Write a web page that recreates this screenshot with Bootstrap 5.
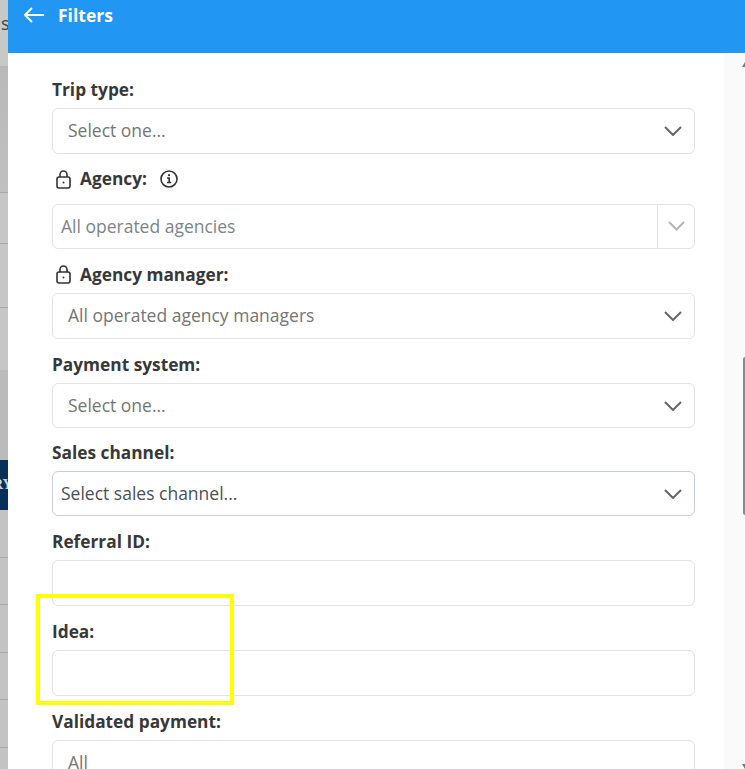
<!DOCTYPE html>
<html lang="en">
<head>
<meta charset="utf-8">
<title>Filters</title>
<link rel="stylesheet" href="https://cdn.jsdelivr.net/npm/bootstrap@5.3.0/dist/css/bootstrap.min.css">
<style>
html,body{height:769px;overflow:hidden}
body{font-family:"Open Sans",sans-serif;color:#333;background:#fff}
.stage{height:769px;overflow:hidden}
.backdrop{width:8px;flex:none;background:#c2c3c2;position:relative;overflow:hidden}
.backdrop-band{position:absolute;left:0;width:100%}
.band-top{top:0;height:66px;background:#c8c8c7}
.band-upper{top:66px;height:126px;background:linear-gradient(#b9b9b9,#c0c0c0)}
.band-middle{top:192px;height:178px;background:#c6c6c6}
.band-lower{top:370px;height:90px;background:#bbb}
.backdrop-s{position:absolute;left:1px;top:12px;font-size:18px;color:#444;line-height:22px}
.backdrop-line{height:1px;background:#a9a9a9;width:100%;position:absolute;left:0}
.backdrop-dark{position:absolute;left:0;top:460px;width:8px;height:50px;background:#07305a;color:#ccd4dc;font:700 14px "Liberation Serif",serif;line-height:50px;overflow:hidden;white-space:nowrap;text-indent:-7px}
.drawer{flex:1 1 auto;min-width:0;display:flex;flex-direction:column}
.drawer-head{height:53px;flex:none;background:#2196f3;color:#fff;padding:4px 0 0 16px;gap:14px;font-weight:700;font-size:17.5px;line-height:22px}
.drawer-body{flex:1 1 auto;display:flex;min-height:0}
.form-area{width:716px;flex:none;padding:25px 29px 0 44px}
.track{flex:1 1 auto;background:#fafafa;position:relative}
.thumb{position:absolute;right:0;top:304px;width:2px;height:158px;background:#8a8a8a;border-radius:2px 0 0 2px}
.arrow-up,.arrow-down{position:absolute;right:0;width:0;height:0;border-left:3px solid transparent}
.arrow-up{top:9px;border-bottom:5px solid #777}
.arrow-down{bottom:0;border-top:5px solid #777}
.field-label{font-weight:700;font-size:17.3px;line-height:22px;color:#383838;margin:0 0 7px;padding-top:1px;gap:9px;box-sizing:content-box}
.field-label.tall-gap{margin-bottom:14px}
.field-box{height:46px;border:1px solid #e3e3e3;border-radius:6px;background:#fff;color:#757575;font-size:17.5px;line-height:42px;padding:0 15px;margin-bottom:13.8px;position:relative}
.field-box.first-box{margin-bottom:13px}
.field-box svg{position:absolute;right:12px;top:17px}
.compact{height:45px;line-height:42px}
.edge-tight{padding-left:8px}
.strong-edge{border-color:#c9ced6;color:#495057}
.muted-text{color:#7d838a}
.split-end{position:absolute;right:0;top:0;bottom:0;width:37px;border-left:1px solid #e3e3e3}
.split-end svg{right:9px;top:16px}
.highlight{position:absolute;left:36px;top:594px;width:198px;height:111px;border:4px solid #ff0;pointer-events:none}
</style>
</head>
<body>
<div class="stage d-flex position-relative">
  <div class="backdrop">
    <div class="backdrop-band band-top"></div>
    <div class="backdrop-band band-upper"></div>
    <div class="backdrop-band band-middle"></div>
    <div class="backdrop-band band-lower"></div>
    <div class="backdrop-s">s</div>
    <div class="backdrop-line" style="top:192px"></div>
    <div class="backdrop-line" style="top:243px"></div>
    <div class="backdrop-line" style="top:307px"></div>
    <div class="backdrop-dark">RY</div>
    <div class="backdrop-line" style="top:557px"></div>
    <div class="backdrop-line" style="top:604px"></div>
    <div class="backdrop-line" style="top:652px"></div>
    <div class="backdrop-line" style="top:699px"></div>
    <div class="backdrop-line" style="top:747px"></div>
  </div>
  <div class="drawer">
    <div class="drawer-head d-flex align-items-start">
      <svg width="20" height="22" viewBox="0 0 20 22" fill="none" stroke="#fff" stroke-width="2" aria-hidden="true"><path d="M1 11h19M8 4 1 11l7 7"/></svg>
      <span>Filters</span>
    </div>
    <div class="drawer-body">
      <div class="form-area">
        <div class="field-label">Trip type:</div>
        <div class="field-box first-box">Select one...<svg width="18" height="10" viewBox="0 0 18 10" fill="none" stroke="#666" stroke-width="2"><path d="M1 1l8 8 8-8"/></svg></div>
        <div class="field-label tall-gap d-flex align-items-center ps-1"><svg width="15" height="19" viewBox="0 0 15 19" fill="none" stroke="#333" stroke-width="1.6"><rect x="1" y="7" width="13" height="11" rx="2"/><path d="M4 7V4.500a3.500 3.500 0 0 1 7 0V7"/><circle cx="7.500" cy="12.500" r="1" fill="#333" stroke="none"/></svg><span>Agency:</span><svg class="ms-1" width="18" height="18" viewBox="0 0 18 18" fill="none" stroke="#333" stroke-width="1.6"><circle cx="9" cy="9" r="8"/><path d="M7 8h2.200v4.500M7 12.500h4.200"/><circle cx="9" cy="5.200" r="1.100" fill="#333" stroke="none"/></svg></div>
        <div class="field-box compact edge-tight muted-text">All operated agencies<span class="split-end"><svg width="17" height="10" viewBox="0 0 17 10" fill="none" stroke="#b5b5b5" stroke-width="2"><path d="M1 1l7.500 7.500L16 1"/></svg></span></div>
        <div class="field-label d-flex align-items-center ps-1"><svg width="15" height="19" viewBox="0 0 15 19" fill="none" stroke="#333" stroke-width="1.6"><rect x="1" y="7" width="13" height="11" rx="2"/><path d="M4 7V4.500a3.500 3.500 0 0 1 7 0V7"/><circle cx="7.500" cy="12.500" r="1" fill="#333" stroke="none"/></svg><span>Agency manager:</span></div>
        <div class="field-box">All operated agency managers<svg width="18" height="10" viewBox="0 0 18 10" fill="none" stroke="#666" stroke-width="2"><path d="M1 1l8 8 8-8"/></svg></div>
        <div class="field-label">Payment system:</div>
        <div class="field-box compact">Select one...<svg width="18" height="10" viewBox="0 0 18 10" fill="none" stroke="#666" stroke-width="2"><path d="M1 1l8 8 8-8"/></svg></div>
        <div class="field-label">Sales channel:</div>
        <div class="field-box compact edge-tight strong-edge">Select sales channel...<svg width="18" height="10" viewBox="0 0 18 10" fill="none" stroke="#5f6670" stroke-width="2"><path d="M1 1l8 8 8-8"/></svg></div>
        <div class="field-label">Referral ID:</div>
        <div class="field-box"></div>
        <div class="field-label">Idea:</div>
        <div class="field-box"></div>
        <div class="field-label">Validated payment:</div>
        <div class="field-box">All</div>
      </div>
      <div class="track">
        <div class="arrow-up"></div>
        <div class="thumb"></div>
        <div class="arrow-down"></div>
      </div>
    </div>
  </div>
  <div class="highlight"></div>
</div>
<script src="https://cdn.jsdelivr.net/npm/bootstrap@5.3.0/dist/js/bootstrap.bundle.min.js"></script>
</body>
</html>
